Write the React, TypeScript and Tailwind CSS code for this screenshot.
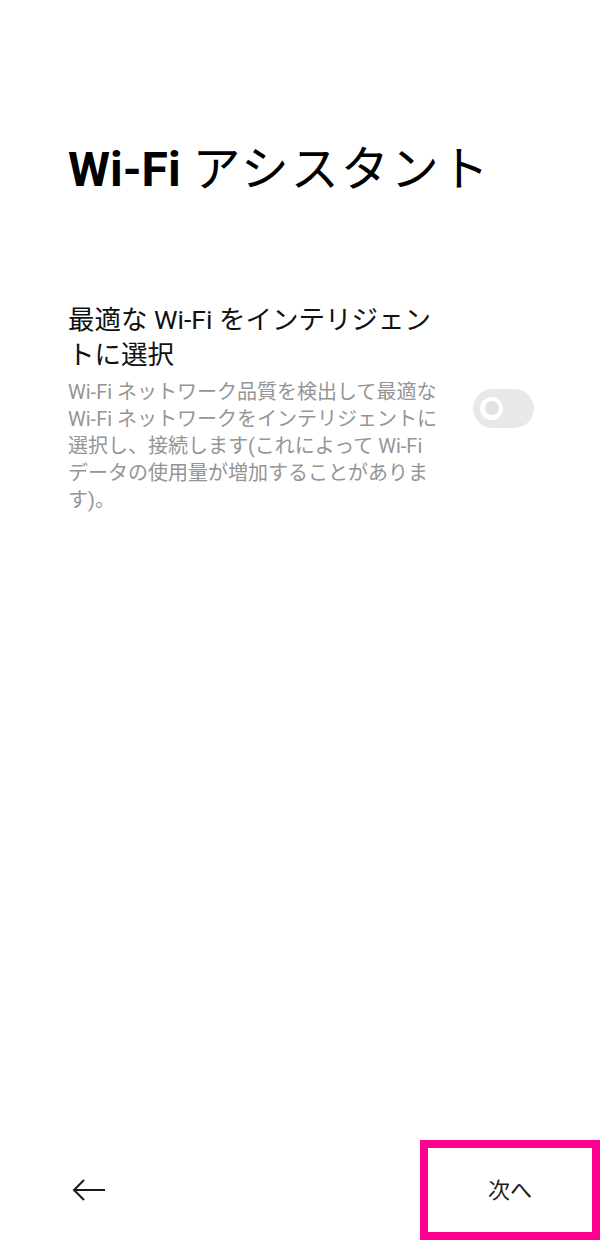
import React from "react";

const font = { fontFamily: 'Roboto, "Noto Sans CJK JP", sans-serif' };

function Toggle() {
  return (
    <div className="w-[61px] h-[39px] rounded-full bg-[#e8e8e8] flex items-center pl-[7px] shrink-0">
      <div className="w-[23px] h-[23px] rounded-full bg-white flex items-center justify-center">
        <div className="w-[14px] h-[14px] rounded-full bg-[#e2e2e2]" />
      </div>
    </div>
  );
}

export default function App() {
  return (
    <div className="w-[600px] h-[1240px] bg-white flex flex-col" style={font}>
      <h1 className="pt-[142px] pl-[68px] text-[48px] leading-[56px] text-black">
        <span className="font-bold">Wi-Fi</span>{" "}
        <span className="font-normal tracking-[2px]">アシスタント</span>
      </h1>

      <div className="mt-[104px] pl-[68px] pr-[66px] flex items-center">
        <div className="w-[390px]">
          <p className="text-[26.5px] leading-[35px] text-[#111]">
            最適な Wi-Fi をインテリジェン
            <br />
            トに選択
          </p>
          <p className="mt-[7px] text-[20px] leading-[27px] text-[#959595]">
            Wi-Fi ネットワーク品質を検出して最適な
            <br />
            Wi-Fi ネットワークをインテリジェントに
            <br />
            選択し、接続します(これによって Wi-Fi
            <br />
            データの使用量が増加することがありま
            <br />
            す)。
          </p>
        </div>
        <div className="ml-auto">
          <Toggle />
        </div>
      </div>

      <div className="flex-1" />

      <div className="h-[100px] flex items-center justify-between pl-[72px]">
        <svg width="34" height="24" viewBox="0 0 34 24" fill="none" stroke="#1a1a1a" strokeWidth="2">
          <path d="M2 12 H33" />
          <path d="M12 2 L2 12 L12 22" strokeLinejoin="miter" />
        </svg>
        <div className="w-[180px] h-[100px] border-[8px] border-[#ff0090] flex items-center justify-center">
          <span className="text-[22px] text-[#1a1a1a]">次へ</span>
        </div>
      </div>
    </div>
  );
}
